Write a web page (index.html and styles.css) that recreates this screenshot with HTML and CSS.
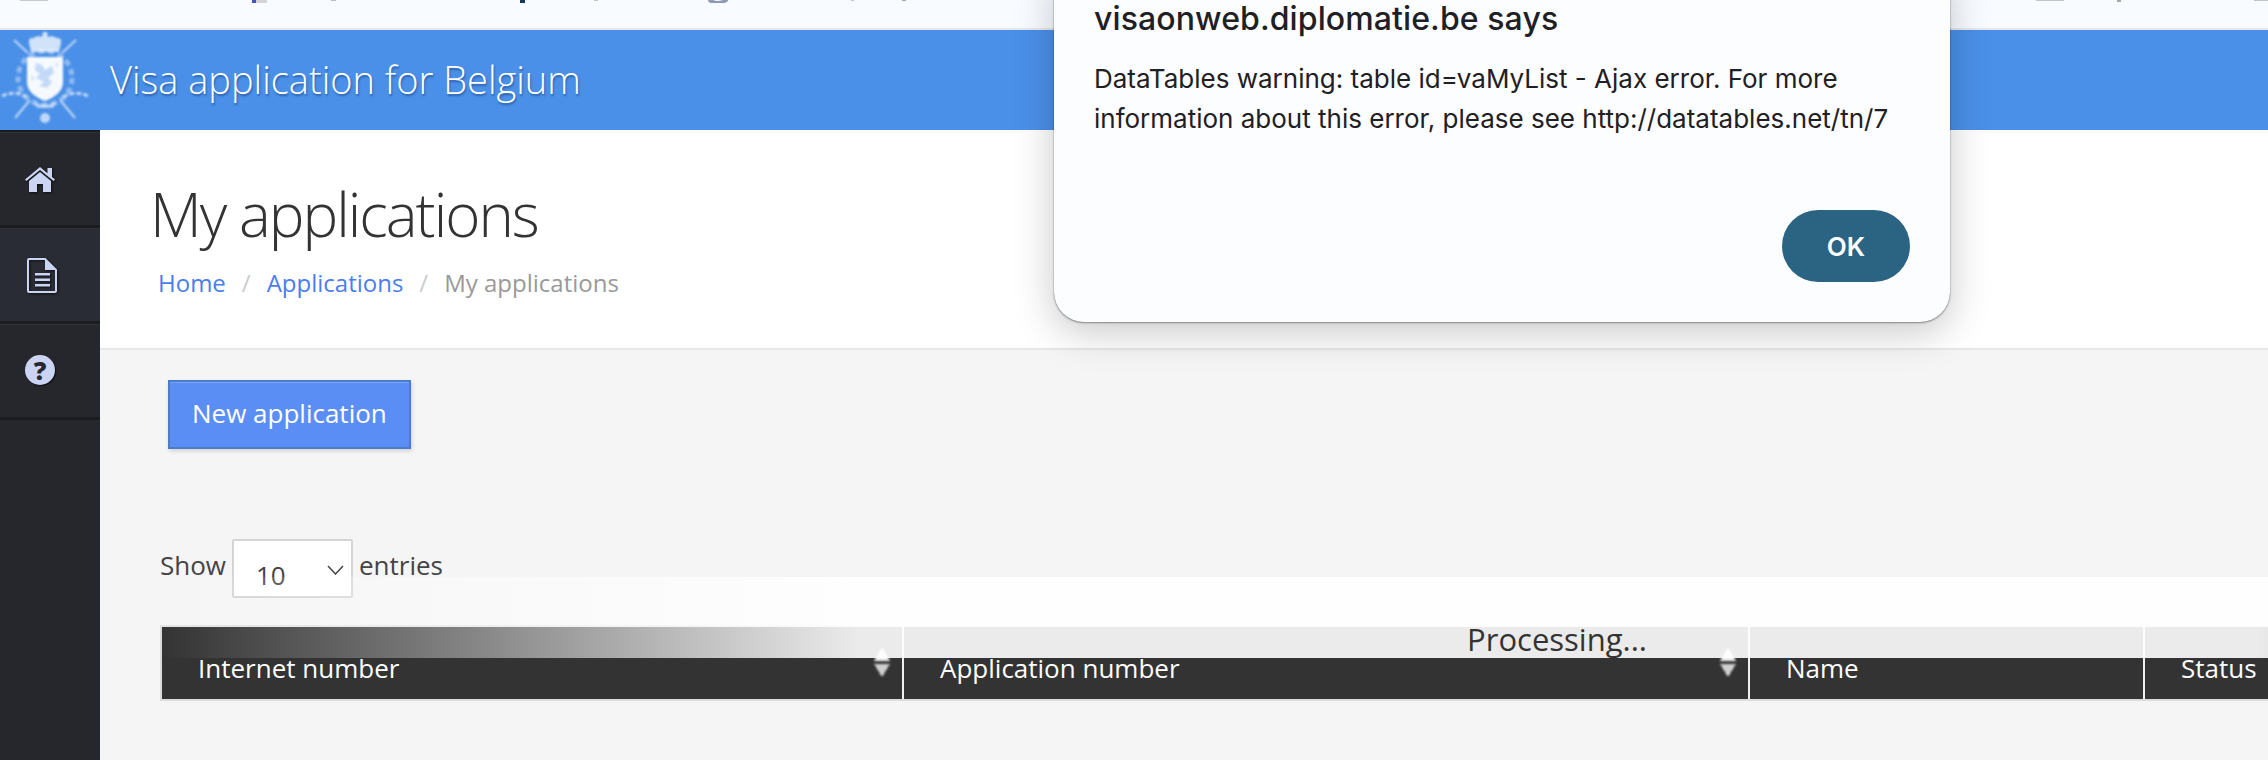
FILE: index.html
```html
<!DOCTYPE html>
<html lang="en">
<head>
    <meta charset="UTF-8">
    <title>My applications - Visa application for Belgium</title>
    <link rel="stylesheet" href="styles.css">
</head>
<body>
<div class="browser-bar">
    <svg class="browser-icons" width="2268" height="4" viewBox="0 0 2268 4">
        <rect x="20" width="28" height="1" fill="#c9c9c9"/>
        <rect x="252" width="4" height="3" fill="#3f55c0"/>
        <rect x="256" width="11" height="3" fill="#d3d3d6"/>
        <rect x="331" width="5" height="1" fill="#bdbdbd"/>
        <rect x="520" width="5" height="3" fill="#1d3560"/>
        <rect x="594" width="4" height="1" fill="#c4c4c4"/>
        <path d="M708 0h5q4 2 10 0h5v1l-3 2h-15l-2-2z" fill="#8f9bb5"/>
        <rect x="851" width="3" height="1" fill="#c4c4c4"/>
        <rect x="902" width="4" height="1" fill="#a9a9a9"/>
        <rect x="2036" width="28" height="1" fill="#c4c4c4"/>
        <rect x="2117" width="4" height="2" fill="#a9a9a9"/>
        <rect x="2254" width="14" height="1" fill="#c4c4c4"/>
    </svg>
</div>

<div class="site-header">
    <svg class="crest" width="90" height="100" viewBox="0 0 90 100">
        <g fill="none" stroke="#fff" stroke-width="2" opacity="0.65">
            <path d="M14 10L28 23M76 10L62 23"/>
            <path d="M15 88L30 70M75 88L60 70"/>
            <circle cx="45" cy="48" r="27" stroke-dasharray="6 4" stroke-width="5" opacity="0.6"/>
            <path d="M2 66q13 -6 25 1M88 66q-13 -6 -25 1" stroke-width="3" stroke-dasharray="5 2"/>
        </g>
        <path d="M29 13q-1 -5 4 -5l5 -2 4 1 1 -5 4 0 1 5 4 -1 5 2q5 0 4 5l-2 9H31z" fill="#fff" opacity="0.75"/>
        <path d="M27 27H63V52Q63 64 45 71Q27 64 27 52Z" fill="#fff" opacity="0.95"/>
        <path d="M36 33l6 2 3 5 7 -4 2 7 -6 5 4 4 -5 6 -8 -2 5 -4 -8 -4 4 -4 -5 -4zM56 32l2 3 -2 2zM31 45l3 3 -2 3z" fill="#c3d9f6"/>
        <circle cx="45" cy="88" r="5" fill="#fff" opacity="0.65"/>
        <path d="M34 72q11 5 22 0l-3 6h-16z" fill="#fff" opacity="0.55"/>
    </svg>
    <span class="site-title">Visa application for Belgium</span>
</div>

<div class="layout">
    <div class="sidebar">
        <a class="side-item">
            <svg class="side-icon" width="30" height="25" viewBox="0 0 30 25">
                <path d="M15 0L22.5 6.2V1H27V9.9L30 12.5 28.6 14 15 3 1.4 14 0 12.5Z"/>
                <path d="M15 5L26 14V25H18V17H12V25H4V14Z"/>
            </svg>
        </a>
        <a class="side-item side-item-alt">
            <svg class="side-icon" width="30" height="35" viewBox="0 0 30 35">
                <path d="M2 1H18L29 12V33Q29 34 28 34H2Q1 34 1 33V2Q1 1 2 1Z" fill="none" stroke="#cbd4f2" stroke-width="2"/>
                <path d="M18 1L29 12H18Z"/>
                <rect x="8" y="15" width="15" height="2.5"/>
                <rect x="8" y="20.5" width="15" height="2.5"/>
                <rect x="8" y="26" width="15" height="2.5"/>
            </svg>
        </a>
        <a class="side-item">
            <span class="help-icon">?</span>
        </a>
    </div>

    <div class="content">
        <div class="page-head">
            <h1>My applications</h1>
            <div class="breadcrumb">
                <a href="#">Home</a>
                <span class="sep">/</span>
                <a href="#">Applications</a>
                <span class="sep">/</span>
                <span class="current">My applications</span>
            </div>
        </div>

        <div class="page-body">
            <a class="new-button">New application</a>

            <div class="length-row">
                <span>Show</span>
                <span class="select-box">
                    <select class="entries-select"><option>10</option></select>
                    <svg class="select-arrow" width="17" height="10" viewBox="0 0 17 10">
                        <path d="M1 1L8.5 9 16 1" fill="none" stroke="#444" stroke-width="1.5"/>
                    </svg>
                </span>
                <span>entries</span>
            </div>

            <div class="table-wrap">
                <div class="processing">Processing...</div>
                <table class="list-table">
                    <thead>
                    <tr>
                        <th class="col-internet">Internet number<span class="sort"></span></th>
                        <th class="col-application">Application number<span class="sort"></span></th>
                        <th class="col-name">Name</th>
                        <th class="col-status">Status</th>
                    </tr>
                    </thead>
                </table>
            </div>
        </div>
    </div>
</div>

<div class="alert-box">
    <div class="alert-title">visaonweb.diplomatie.be says</div>
    <p class="alert-text">DataTables warning: table id=vaMyList - Ajax error. For more information about this error, please see http://datatables.net/tn/7</p>
    <div class="alert-actions">
        <a class="alert-ok">OK</a>
    </div>
</div>
</body>
</html>
```

FILE: styles.css
```css
html, body {
    height: 100%;
}
body {
    font-family: "Open Sans", Arial, sans-serif;
    margin: 0;
    padding: 0;
    height: 760px;
    color: #333;
    background-color: #f5f5f5;
    overflow: hidden;
    display: flex;
    flex-direction: column;
}

/* clipped browser toolbar */
.browser-bar {
    height: 28px;
    background: #f8fbff;
    border-bottom: 2px solid #e6e8ec;
    flex-shrink: 0;
}
.browser-icons {
    display: block;
}

.site-header {
    height: 100px;
    background: #4a90e8;
    display: flex;
    align-items: center;
    flex-shrink: 0;
}
.crest {
    filter: blur(1px);
}
.site-title {
    margin-left: 20px;
    margin-top: -2px;
    font-size: 38px;
    font-weight: 300;
    color: #fff;
    text-shadow: 1px 2px 2px #2f62a8;
}

.layout {
    flex: 1;
    display: flex;
    min-height: 0;
}
.sidebar {
    width: 100px;
    flex-shrink: 0;
    background: #26272c;
    border-top: 2px solid #1b1c1f;
    box-sizing: border-box;
}
.side-item {
    display: flex;
    align-items: center;
    height: 92px;
    padding-left: 25px;
    border-top: 1px solid #303137;
    border-bottom: 3px solid #1b1c1f;
}
.side-item-alt {
    background: #292c34;
}
.side-icon {
    fill: #cbd4f2;
    filter: drop-shadow(1px 1px 1px #0e0e10);
}
.side-item-alt .side-icon {
    margin-left: 2px;
}
.help-icon {
    width: 30px;
    height: 30px;
    margin-top: -2px;
    border-radius: 50%;
    background: #cbd4f2;
    color: #26272c;
    font-size: 25px;
    font-weight: 800;
    line-height: 30px;
    text-align: center;
    box-shadow: 1px 1px 1px #0e0e10;
}

.content {
    flex: 1;
    min-width: 0;
    overflow: hidden;
}
.page-head {
    height: 218px;
    background: #fff;
    border-bottom: 2px solid #e7e7e7;
    padding-left: 50px;
}
.page-head h1 {
    margin: 0;
    padding-top: 43px;
    font-size: 60px;
    line-height: 82px;
    font-weight: 300;
    letter-spacing: -2px;
    color: #333;
}
.breadcrumb {
    margin-top: 11px;
    padding-left: 8px;
    display: flex;
    font-size: 24px;
    line-height: 33px;
    color: #999;
}
.breadcrumb a {
    color: #4a7df0;
    text-decoration: none;
}
.breadcrumb .sep {
    margin: 0 16px;
    color: #ccc;
}

.page-body {
    padding: 30px 0 0 60px;
}
.new-button {
    display: inline-block;
    margin-left: 8px;
    padding: 0 22px;
    height: 65px;
    line-height: 63px;
    font-size: 26px;
    color: #fff;
    background: #5b8ef5;
    border: 2px solid #4a7dc4;
    box-shadow: 1px 2px 4px rgba(0, 0, 0, 0.15), inset 0 1px 0 #7ba6f7;
}
.length-row {
    display: flex;
    align-items: flex-start;
    margin-top: 90px;
    font-size: 26px;
    line-height: 53px;
    gap: 6px;
    color: #444;
}
.select-box {
    position: relative;
    display: block;
    width: 121px;
    height: 59px;
}
.entries-select {
    appearance: none;
    display: block;
    width: 100%;
    height: 59px;
    box-sizing: border-box;
    padding: 12px 0 0 22px;
    border: 2px solid #d4d4d4;
    border-radius: 2px;
    background: #fff;
    font-family: "Open Sans", Arial, sans-serif;
    font-size: 26px;
    color: #444;
    outline: none;
}
.select-arrow {
    position: absolute;
    top: 26px;
    left: 95px;
}

.table-wrap {
    position: relative;
    margin-top: 27px;
    width: 2200px;
}
.processing {
    position: absolute;
    z-index: 2;
    top: -48px;
    left: 0;
    width: 2794px;
    height: 81px;
    padding-top: 40px;
    box-sizing: border-box;
    text-align: center;
    font-size: 31px;
    line-height: 44px;
    color: #333;
    background: linear-gradient(to right, rgba(255, 255, 255, 0) 0%, rgba(255, 255, 255, 0.9) 25%, rgba(255, 255, 255, 0.9) 75%, rgba(255, 255, 255, 0) 100%);
}
.list-table {
    table-layout: fixed;
    width: 2200px;
    border-collapse: separate;
    border-spacing: 0;
    border-top: 2px solid #e3e3e3;
    border-bottom: 2px solid #dcdcdc;
    border-left: 2px solid #dcdcdc;
}
.list-table th {
    position: relative;
    height: 72px;
    padding: 25px 0 0 36px;
    box-sizing: border-box;
    background: #333;
    border-right: 2px solid #f0f0f0;
    color: #fff;
    font-size: 26px;
    font-weight: 400;
    text-align: left;
    vertical-align: top;
    line-height: 33px;
}
.col-internet { width: 742px; }
.col-application { width: 846px; }
.col-name { width: 395px; }
.sort {
    position: absolute;
    top: 20px;
    right: 12px;
    width: 16px;
    height: 30px;
    filter: blur(1.2px);
    background:
        linear-gradient(to bottom right, transparent 50%, #f2f2f2 50%) 0 0 / 8px 14px no-repeat,
        linear-gradient(to bottom left, transparent 50%, #f2f2f2 50%) 8px 0 / 8px 14px no-repeat,
        linear-gradient(to top right, transparent 50%, #cfcfcf 50%) 0 17px / 8px 13px no-repeat,
        linear-gradient(to top left, transparent 50%, #cfcfcf 50%) 8px 17px / 8px 13px no-repeat;
}

/* browser alert, top edge cut off by the window */
.alert-box {
    position: absolute;
    top: -40px;
    left: 1054px;
    width: 896px;
    height: 362px;
    box-sizing: border-box;
    padding: 41px 40px 0;
    background: #fcfdff;
    border-radius: 30px;
    box-shadow: 0 0 1px rgba(0, 0, 0, 0.5), 0 1px 2px rgba(0, 0, 0, 0.35), 0 10px 40px rgba(0, 0, 0, 0.22);
    font-family: Inter, "Liberation Sans", sans-serif;
    color: #1f2024;
}
.alert-title {
    font-size: 32px;
    font-weight: 500;
    letter-spacing: 0.1px;
    line-height: 36px;
}
.alert-text {
    margin: 22px 0 0;
    font-size: 26px;
    line-height: 40px;
}
.alert-actions {
    display: flex;
    justify-content: flex-end;
    margin-top: 71px;
}
.alert-ok {
    width: 128px;
    height: 72px;
    line-height: 74px;
    text-align: center;
    border-radius: 36px;
    background: #2b6483;
    color: #fff;
    font-size: 26px;
    font-weight: 600;
}
```
